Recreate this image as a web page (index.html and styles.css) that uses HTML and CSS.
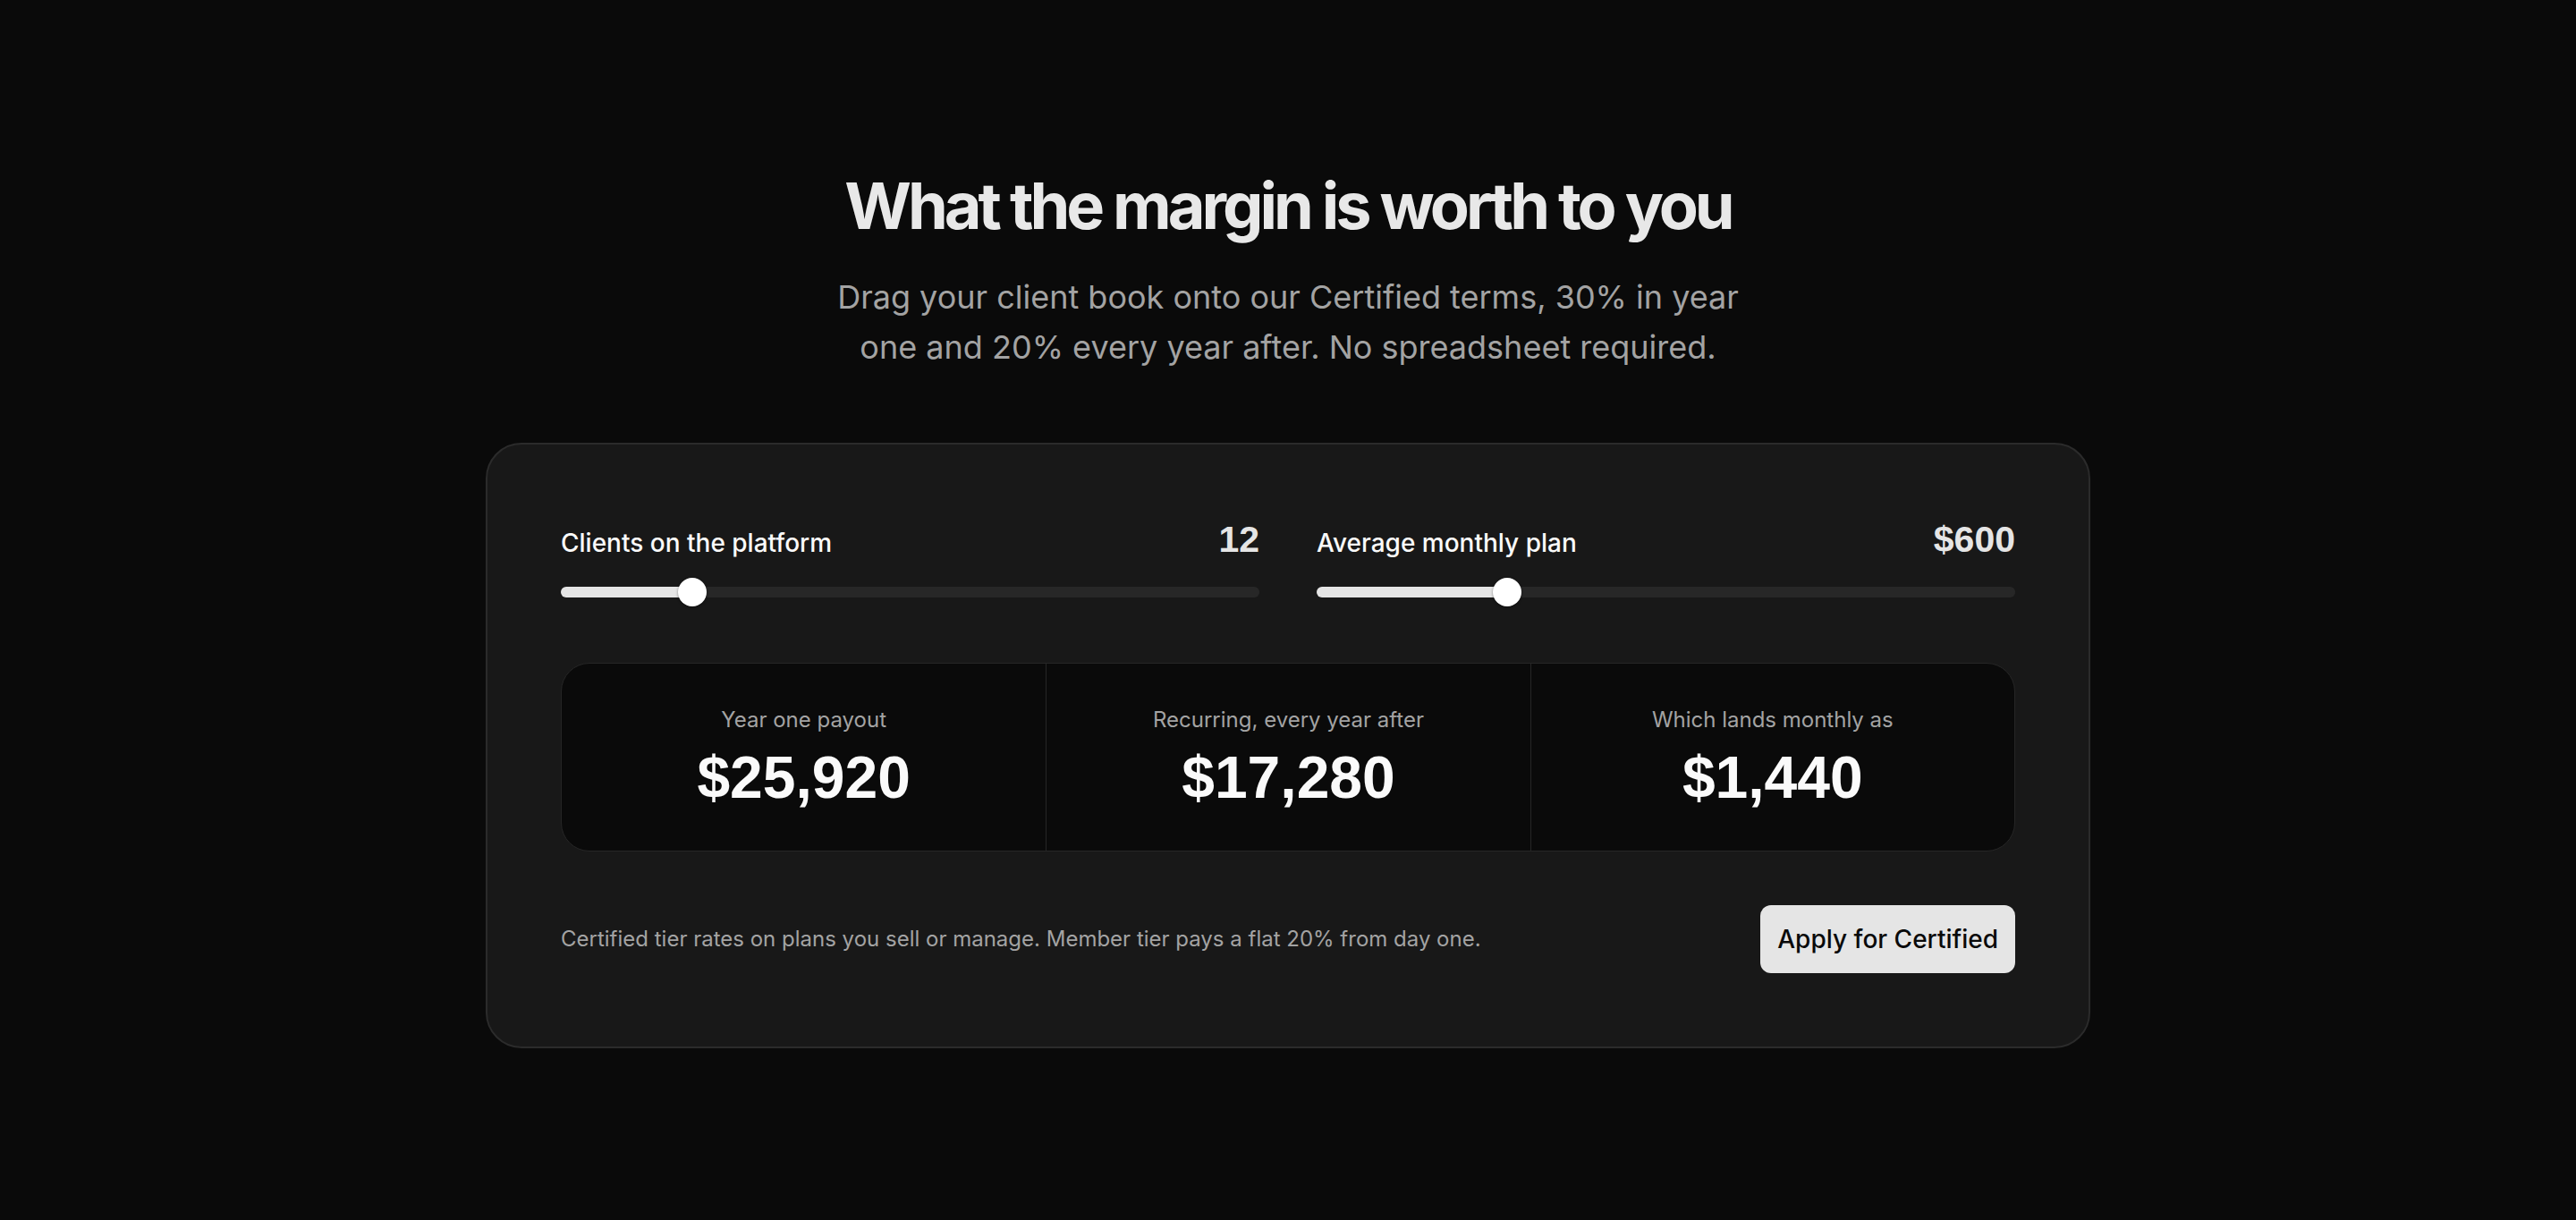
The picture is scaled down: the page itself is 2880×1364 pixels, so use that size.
FILE: index.html
```html
<!DOCTYPE html>
<html lang="en">
<head>
  <meta charset="UTF-8">
  <meta name="viewport" content="width=device-width, initial-scale=1.0">
  <title>Partner Earnings Calculator</title>
  <link rel="stylesheet" href="styles.css">
</head>
<body>

  <section class="calculator">
    <h1 class="title">What the margin is worth to you</h1>
    <p class="subtitle">Drag your client book onto our Certified terms, 30% in year one and 20% every year after. No spreadsheet required.</p>

    <div class="card">
      <div class="sliders">
        <div class="slider">
          <div class="slider-head">
            <label for="clients">Clients on the platform</label>
            <span class="slider-value" id="clientsValue">12</span>
          </div>
          <input type="range" id="clients" min="1" max="64" step="1" value="12" style="--p: 0.1746">
        </div>
        <div class="slider">
          <div class="slider-head">
            <label for="plan">Average monthly plan</label>
            <span class="slider-value" id="planValue">$600</span>
          </div>
          <input type="range" id="plan" min="100" max="2000" step="50" value="600" style="--p: 0.2632">
        </div>
      </div>

      <div class="results">
        <div class="result">
          <span class="result-label">Year one payout</span>
          <span class="result-value" id="yearOne">$25,920</span>
        </div>
        <div class="result">
          <span class="result-label">Recurring, every year after</span>
          <span class="result-value" id="recurring">$17,280</span>
        </div>
        <div class="result">
          <span class="result-label">Which lands monthly as</span>
          <span class="result-value" id="monthly">$1,440</span>
        </div>
      </div>

      <div class="card-foot">
        <p class="note">Certified tier rates on plans you sell or manage. Member tier pays a flat 20% from day one.</p>
        <button class="apply" type="button">Apply for Certified</button>
      </div>
    </div>
  </section>

  <script>
    const clients = document.getElementById('clients');
    const plan = document.getElementById('plan');

    function money(n) {
      return '$' + Math.round(n).toLocaleString('en-US');
    }

    // keep the filled part of the track under the thumb
    function setFill(input) {
      const p = (input.value - input.min) / (input.max - input.min);
      input.style.setProperty('--p', p.toFixed(4));
    }

    function update() {
      const yearly = clients.value * plan.value * 12;

      document.getElementById('clientsValue').textContent = clients.value;
      document.getElementById('planValue').textContent = money(plan.value);
      document.getElementById('yearOne').textContent = money(yearly * 0.3);
      document.getElementById('recurring').textContent = money(yearly * 0.2);
      document.getElementById('monthly').textContent = money(yearly * 0.2 / 12);

      setFill(clients);
      setFill(plan);
    }

    clients.addEventListener('input', update);
    plan.addEventListener('input', update);
    document.addEventListener('DOMContentLoaded', update);
  </script>

</body>
</html>
```

FILE: styles.css
```css
body {
  margin: 0;
  background-color: #0a0a0a;
  color: #fafafa;
  font-family: Inter, "Noto Sans", sans-serif;
}

.calculator {
  padding: 190px 0 120px;
  text-align: center;
}

.title {
  margin: 0;
  font-size: 72px;
  line-height: 1.1;
  font-weight: 700;
  letter-spacing: -0.056em;
  color: #e8e8e8;
}

.subtitle {
  max-width: 1040px;
  margin: 35px auto 0;
  font-size: 36px;
  line-height: 56px;
  color: #a3a3a3;
}

.card {
  box-sizing: border-box;
  width: 1794px;
  margin: 79px auto 0;
  padding: 82px;
  background-color: #181818;
  border: 2px solid #2b2b2b;
  border-radius: 40px;
  text-align: left;
}

.sliders {
  display: grid;
  grid-template-columns: 1fr 1fr;
  gap: 64px;
}

.slider-head {
  display: flex;
  justify-content: space-between;
  align-items: baseline;
  height: 49px;
  line-height: 49px;
}

.slider-head label {
  font-size: 28px;
  font-weight: 500;
  color: #fafafa;
}

.slider-value {
  font-family: "Liberation Sans", Arial, sans-serif;
  font-size: 41px;
  font-weight: 700;
  color: #e5e5e5;
}

input[type="range"] {
  -webkit-appearance: none;
  appearance: none;
  display: block;
  width: 100%;
  height: 32px;
  margin: 18px 0 0;
  background: transparent;
}

input[type="range"]::-webkit-slider-runnable-track {
  height: 12px;
  border-radius: 6px;
  background: linear-gradient(to right,
    #e5e5e5 calc(16px + (100% - 32px) * var(--p)),
    #272727 calc(16px + (100% - 32px) * var(--p)));
}

input[type="range"]::-webkit-slider-thumb {
  -webkit-appearance: none;
  width: 32px;
  height: 32px;
  margin-top: -10px;
  border-radius: 50%;
  background-color: #fff;
  box-shadow: 0 1px 3px rgba(0, 0, 0, 0.45);
}

.results {
  display: grid;
  grid-template-columns: repeat(3, 1fr);
  margin-top: 63px;
  background-color: #0a0a0a;
  border: 1px solid #262626;
  border-radius: 32px;
}

.result {
  display: flex;
  flex-direction: column;
  align-items: center;
  padding: 46px 0;
}

.result + .result {
  border-left: 1px solid #262626;
}

.result-label {
  font-size: 24px;
  line-height: 1.4;
  color: #a3a3a3;
}

.result-value {
  margin-top: 11px;
  font-family: "Liberation Sans", Arial, sans-serif;
  font-size: 66px;
  line-height: 72px;
  font-weight: 700;
  color: #fafafa;
}

.card-foot {
  display: flex;
  justify-content: space-between;
  align-items: center;
  margin-top: 60px;
}

.note {
  margin: 0;
  font-size: 24px;
  color: #a3a3a3;
}

.apply {
  height: 76px;
  padding: 0 19px;
  border: none;
  border-radius: 12px;
  background-color: #e5e5e5;
  color: #0a0a0a;
  font-family: Inter, "Noto Sans", sans-serif;
  font-size: 28px;
  font-weight: 500;
  cursor: pointer;
}
```
